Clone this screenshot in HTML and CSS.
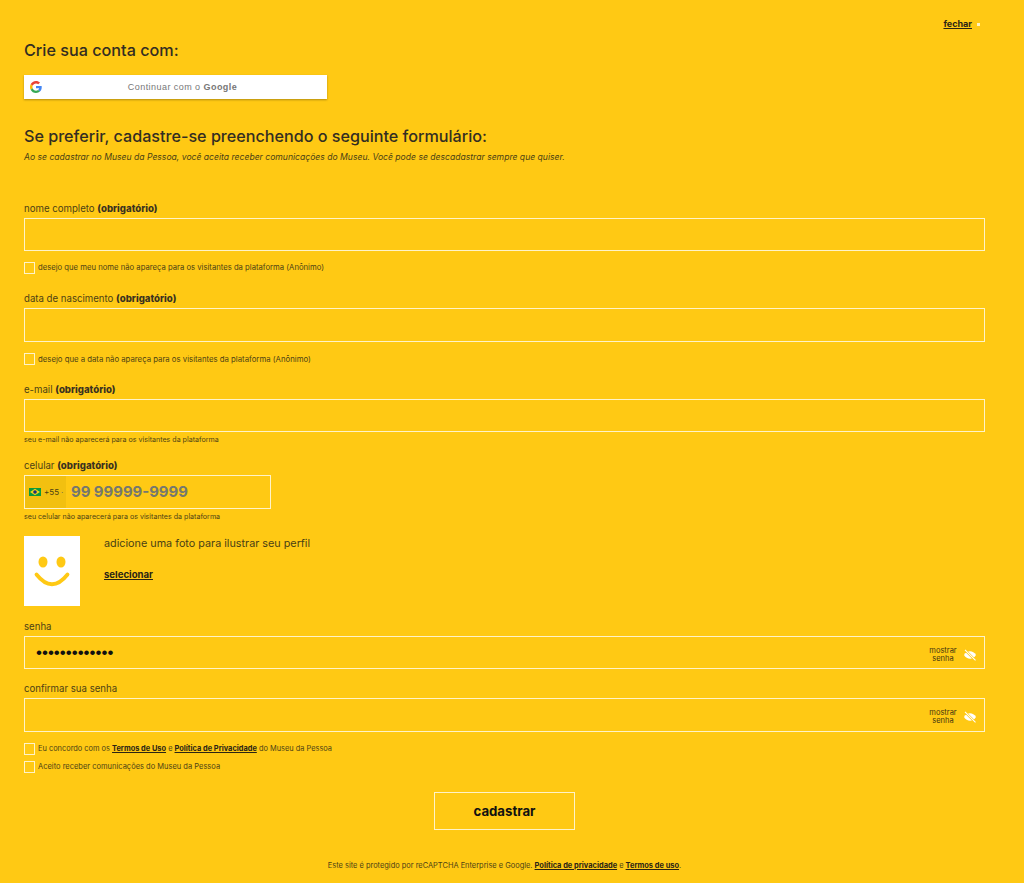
FILE: index.html
```html
<!DOCTYPE html>
<html lang="pt-BR">
<head>
<meta charset="utf-8">
<title>Crie sua conta</title>
<link rel="stylesheet" href="styles.css">
</head>
<body>
<main class="page">
  <div class="close-row"><a class="close-link" href="#">fechar</a><span class="close-x"></span></div>
  <h1 class="title">Crie sua conta com:</h1>
  <button class="google" type="button">
    <svg class="google-icon" viewBox="0 0 48 48" width="12" height="12"><path fill="#EA4335" d="M24 9.500c3.500 0 6.700 1.200 9.200 3.600l6.900-6.900C35.900 2.400 30.500 0 24 0 14.600 0 6.500 5.400 2.600 13.200l8 6.200C12.500 13.700 17.800 9.500 24 9.500z"/><path fill="#4285F4" d="M46.900 24.500c0-1.600-.1-3.100-.4-4.500H24v9h12.900c-.6 3-2.200 5.500-4.800 7.200l7.700 6c4.500-4.200 7.100-10.300 7.100-17.700z"/><path fill="#FBBC05" d="M10.500 28.600c-.5-1.400-.8-3-.8-4.600s.3-3.100.8-4.600l-8-6.200C.9 16.500 0 20.100 0 24s.9 7.500 2.600 10.800l7.900-6.200z"/><path fill="#34A853" d="M24 48c6.500 0 11.900-2.100 15.900-5.800l-7.700-6c-2.200 1.400-4.900 2.300-8.200 2.300-6.200 0-11.500-4.200-13.400-9.900l-8 6.200C6.500 42.600 14.600 48 24 48z"/></svg>
    <span class="google-text">Continuar com o <b>Google</b></span>
  </button>
  <h2 class="subtitle">Se preferir, cadastre-se preenchendo o seguinte formulário:</h2>
  <p class="lead">Ao se cadastrar no Museu da Pessoa, você aceita receber comunicações do Museu. Você pode se descadastrar sempre que quiser.</p>

  <form class="form">
    <div class="field field-first">
      <label class="label">nome completo <b>(obrigatório)</b></label>
      <div class="input input-a"></div>
      <div class="check check-a"><span class="box"></span><span class="check-text">desejo que meu nome não apareça para os visitantes da plataforma (Anônimo)</span></div>
    </div>
    <div class="field field-date">
      <label class="label">data de nascimento <b>(obrigatório)</b></label>
      <div class="input input-b"></div>
      <div class="check check-a"><span class="box"></span><span class="check-text check-text-date">desejo que a data não apareça para os visitantes da plataforma (Anônimo)</span></div>
    </div>
    <div class="field field-mail">
      <label class="label">e-mail <b>(obrigatório)</b></label>
      <div class="input input-a"></div>
      <p class="hint">seu e-mail não aparecerá para os visitantes da plataforma</p>
    </div>
    <div class="field field-phone">
      <label class="label">celular <b>(obrigatório)</b></label>
      <div class="phone">
        <div class="dial">
          <svg class="flag" viewBox="0 0 12 8" width="12" height="8"><rect width="12" height="8" fill="#0a9a3c"/><path d="M6 .8 11 4 6 7.200 1 4z" fill="#f7d417"/><circle cx="6" cy="4" r="1.800" fill="#1c2f78"/></svg>
          <span class="dial-code">+55</span><span class="dial-caret">·</span>
        </div>
        <span class="phone-placeholder">99 99999-9999</span>
      </div>
      <p class="hint">seu celular não aparecerá para os visitantes da plataforma</p>
    </div>
    <div class="photo">
      <div class="avatar">
        <svg viewBox="0 0 56 70" width="56" height="70"><ellipse cx="19" cy="26" rx="4.500" ry="5.500" fill="#ffc914"/><ellipse cx="37" cy="26" rx="4.500" ry="5.500" fill="#ffc914"/><path d="M12.500 38.500Q28 58 43.500 38.500" fill="none" stroke="#ffc914" stroke-width="3.800" stroke-linecap="round"/></svg>
      </div>
      <div class="photo-body">
        <p class="photo-text">adicione uma foto para ilustrar seu perfil</p>
        <a class="photo-link" href="#">selecionar</a>
      </div>
    </div>
    <div class="field field-pass">
      <label class="label">senha</label>
      <div class="input input-pass input-a">
        <span class="dots">•••••••••••••</span>
        <span class="show">mostrar<br>senha</span>
        <svg class="eye" viewBox="0 0 14 12" width="14" height="12"><path d="M1 6c3-5 9-5 12 0-3 5-9 5-12 0z" fill="#fff"/><path d="M2 1l10 10" stroke="#ffc914" stroke-width="2.400"/><path d="M2 .8l10.500 10.500" stroke="#fff" stroke-width="1.100"/></svg>
      </div>
    </div>
    <div class="field field-confirm">
      <label class="label">confirmar sua senha</label>
      <div class="input input-pass input-b">
        <span class="show">mostrar<br>senha</span>
        <svg class="eye" viewBox="0 0 14 12" width="14" height="12"><path d="M1 6c3-5 9-5 12 0-3 5-9 5-12 0z" fill="#fff"/><path d="M2 1l10 10" stroke="#ffc914" stroke-width="2.400"/><path d="M2 .8l10.500 10.500" stroke="#fff" stroke-width="1.100"/></svg>
      </div>
    </div>
    <div class="check check-terms"><span class="box"></span><span class="check-text check-text-terms">Eu concordo com os <a href="#">Termos de Uso</a> e <a href="#">Política de Privacidade</a> do Museu da Pessoa</span></div>
    <div class="check check-news"><span class="box"></span><span class="check-text check-text-news">Aceito receber comunicações do Museu da Pessoa</span></div>
    <div class="submit-row"><button class="submit" type="button">cadastrar</button></div>
  </form>
  <p class="footer">Este site é protegido por reCAPTCHA Enterprise e Google. <a href="#">Política de privacidade</a> e <a href="#">Termos de uso</a>.</p>
</main>
</body>
</html>
```

FILE: styles.css
```css
* { box-sizing: border-box; }
html, body { margin: 0; padding: 0; }
body {
  background: #ffc914;
  color: #3a3220;
  font-family: Inter, "Liberation Sans", sans-serif;
  height: 883px;
  overflow: hidden;
}
.page { width: 961px; margin-left: 24px; padding-top: 19px; }
a { color: #2a2415; font-weight: 700; }

.close-row { display: flex; justify-content: flex-end; align-items: center; height: 10px; padding-right: 5px; gap: 5px; }
.close-link { font-size: 9px; line-height: 10px; }
.close-x { width: 3px; height: 3px; background: #fff3c0; }

.title { margin: 11px 0 0; font-size: 16.200px; line-height: 20px; font-weight: 500; color: #332d22; height: 20px; }

.google {
  display: flex; align-items: center; width: 303px; height: 24px; margin: 15px 0 0; padding: 0 0 0 6px;
  border: 0; background: #fff; box-shadow: 0 1px 2px rgba(0,0,0,.3);
}
.google-icon { flex: none; }
.google-text { flex: 1; text-align: center; font: 9px/12px "Liberation Sans", sans-serif; letter-spacing: .45px; color: #777; padding-right: 4px; }

.subtitle { margin: 27px 0 0; font-size: 16.150px; line-height: 20px; font-weight: 500; color: #332d22; }
.lead { margin: 6px 0 0; font-size: 8.600px; line-height: 10px; font-style: italic; color: #4a3f14; }

.form { display: block; }
.field { display: block; }
.field-first { margin-top: 39px; }
.field-date { margin-top: 17px; }
.field-mail { margin-top: 17px; }
.field-phone { margin-top: 14px; }
.field-pass { margin-top: 13px; }
.field-confirm { margin-top: 12px; }

.label { display: block; height: 14px; padding-top: 1px; font-size: 9.650px; line-height: 14px; color: #4d4214; margin-bottom: 3px; }
.label b { color: #3a3220; font-weight: 800; }

.input { width: 961px; border: 1px solid #fff3c8; }
.input-a { height: 33px; }
.input-b { height: 34px; }
.input-pass { display: flex; align-items: center; position: relative; padding: 0 7px 0 11px; }
.dots { font-size: 17px; line-height: 16px; color: #111; font-family: "Liberation Sans", sans-serif; }
.show { margin-left: auto; margin-top: 4px; width: 30px; text-align: center; font-size: 7.500px; line-height: 8px; color: #3f3510; }
.eye { margin: 4px 0 0 5px; }

.check { display: flex; align-items: center; gap: 3px; }
.check-a { margin-top: 11px; }
.box { flex: none; width: 11px; height: 12px; border: 1px solid #fff3c8; }
.check-text { font-size: 7.700px; line-height: 12px; color: #4d4214; }
.check-text-date { font-size: 7.780px; }
.check-text-terms { font-size: 7.420px; }
.check-text-news { font-size: 7.500px; }
.check-text a { color: #2a2415; }

.hint { margin: 3px 0 0; height: 9px; font-size: 7.100px; line-height: 9px; color: #4d4214; }

.phone { display: flex; align-items: stretch; width: 247px; height: 34px; border: 1px solid #fff3c8; }
.dial { display: flex; align-items: center; width: 41px; background: #f2c010; padding-left: 4px; }
.flag { flex: none; }
.dial-code { margin-left: 3px; font-size: 8px; color: #4d4214; }
.dial-caret { margin-left: 2px; font-size: 8px; color: #6b6b5a; }
.phone-placeholder { margin-left: 5px; font-size: 14.900px; line-height: 32px; font-weight: 700; color: #74776f; }

.photo { display: flex; margin-top: 15px; height: 70px; }
.avatar { width: 56px; height: 70px; background: #fff; flex: none; }
.avatar svg { display: block; }
.photo-body { margin-left: 24px; }
.photo-text { margin: 1px 0 0; font-size: 10.800px; line-height: 14px; color: #4a3f14; }
.photo-link { display: block; margin-top: 18px; font-size: 9.600px; line-height: 12px; }

.check-terms { margin-top: 11px; }
.check-news { margin-top: 6px; }

.submit-row { display: flex; justify-content: center; margin-top: 19px; }
.submit { width: 141px; height: 38px; background: transparent; border: 1px solid #fff3c8; font: 700 13.200px/16px Inter, sans-serif; color: #111; }

.footer { margin: 31px 0 0; width: 961px; text-align: center; font-size: 7.450px; line-height: 10px; color: #4d4214; }
```
